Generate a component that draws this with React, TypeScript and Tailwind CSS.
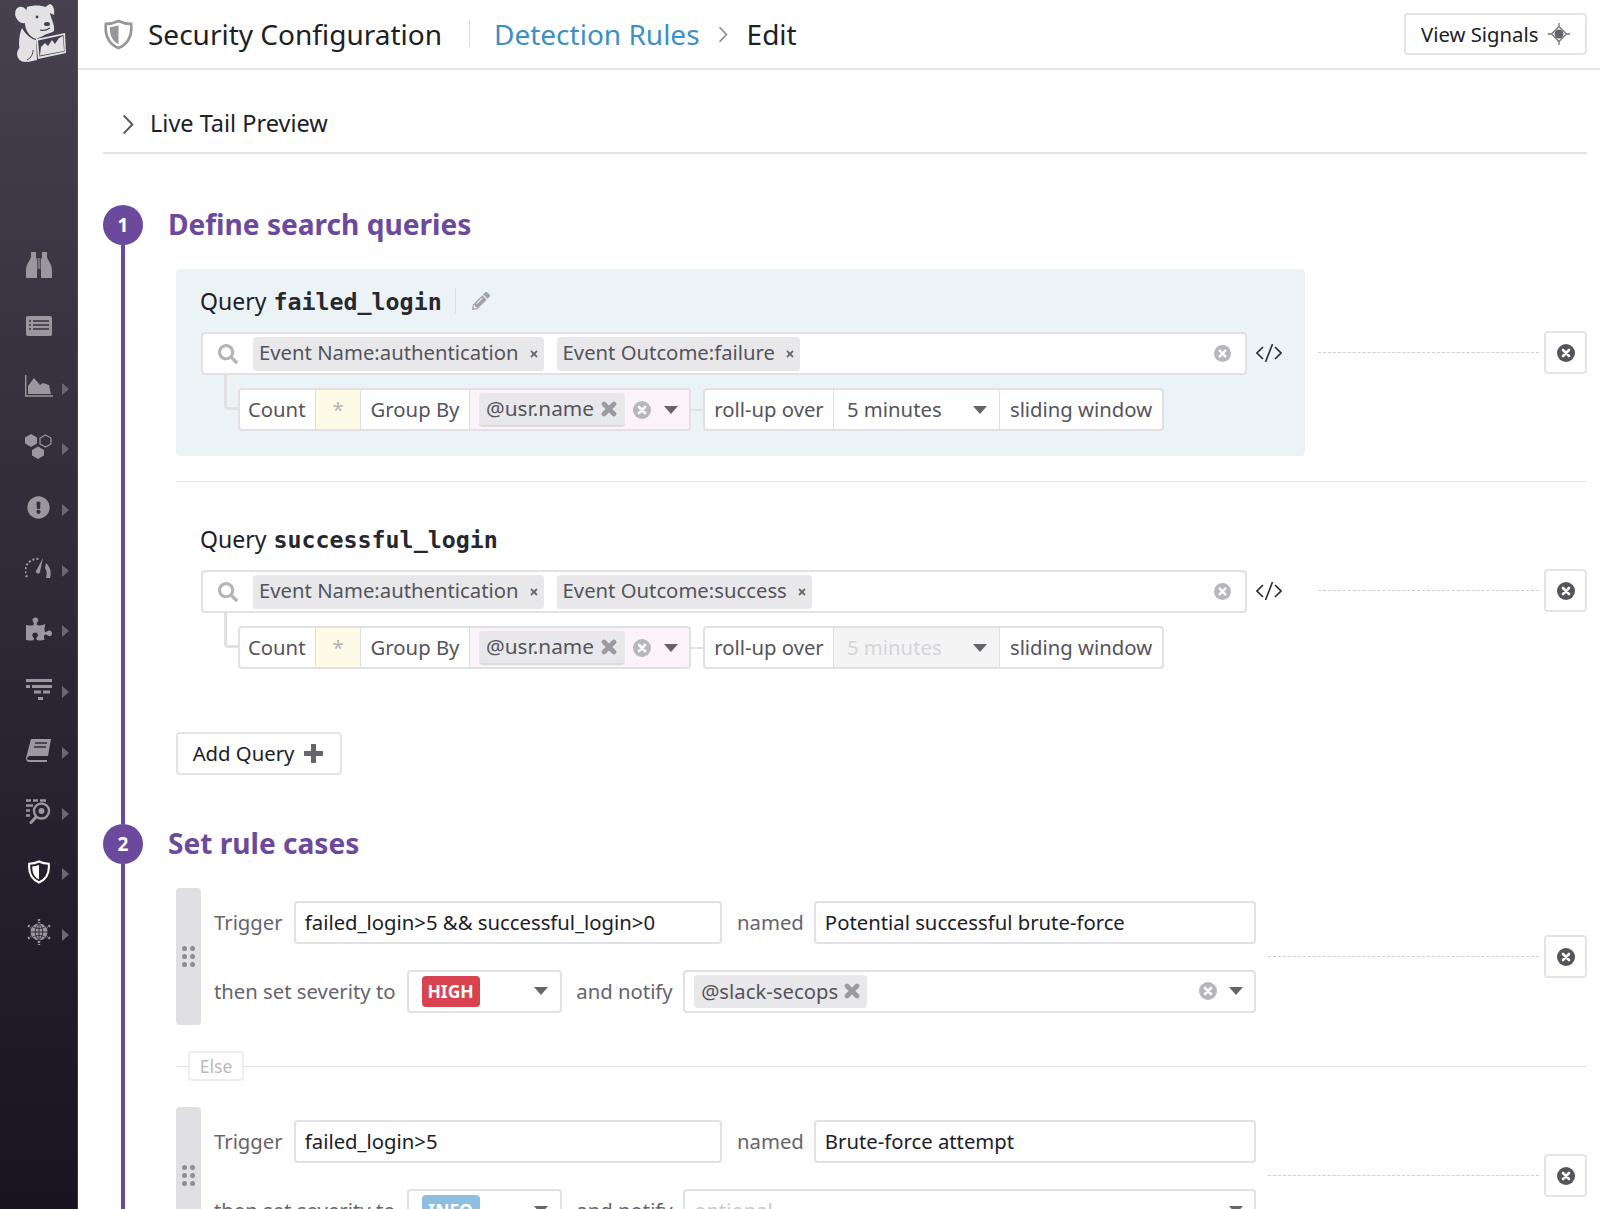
import React from 'react';
import { FaExclamationCircle, FaPuzzlePiece, FaSearch, FaPencilAlt, FaTimes } from 'react-icons/fa';

const Caret = () => (
  <svg width="14" height="8" viewBox="0 0 14 8" className="shrink-0"><path d="M0 0h14L7 8z" fill="#66636b" /></svg>
);

const Chevron = ({ className = '', color = '#55535a' }: { className?: string; color?: string }) => (
  <svg viewBox="0 0 12 22" className={`shrink-0 ${className}`}><path d="M1.500 1.500L10.500 11l-9 9.500" fill="none" stroke={color} strokeWidth="2" /></svg>
);

const ThickX = ({ color = '#9c9aa1' }: { color?: string }) => (
  <svg width="16" height="16" viewBox="0 0 16 16" className="shrink-0"><path d="M3 3l10 10M13 3L3 13" stroke={color} strokeWidth="4.600" strokeLinecap="round" /></svg>
);

const ClearCircle = ({ dark = false, size = 17 }: { dark?: boolean; size?: number }) => (
  <svg width={size} height={size} viewBox="0 0 18 18" className="shrink-0">
    <circle cx="9" cy="9" r="9" fill={dark ? '#56535b' : '#b8b6bc'} />
    <path d="M6 6l6 6M12 6l-6 6" stroke="#fff" strokeWidth="2.600" strokeLinecap="round" />
  </svg>
);

const ShieldIcon = ({ outer, inner, size = 31 }: { outer: string; inner: string; size?: number }) => (
  <svg width={size} height={size} viewBox="0 0 30 32" className="shrink-0">
    <path d="M15 2 C19 4 24 5 28 5 C29 15 27 25 15 30 C3 25 1 15 2 5 C6 5 11 4 15 2Z" fill="none" stroke={outer} strokeWidth="2.800" />
    <path d="M15 6.500 C12 7.500 9 8.300 6 8.500 C6 16 8 22.500 15 26Z" fill={inner} />
  </svg>
);

const Logo = () => (
  <svg width="78" height="70" viewBox="0 0 78 70" className="block">
    <g fill="#e2e1e4">
      <ellipse cx="22" cy="15" rx="6.500" ry="8.500" transform="rotate(-25 22 15)" />
      <path d="M27 7C33 5 41 5 45 7L50 4C53 5 55 9 54 15L50 13C51 19 55 25 54 31C52 33 47 33 43 36L36 39C28 36 24 28 25 19Z" />
      <path d="M22 28C26 35 31 39 36 40L37 60L28 62C22 58 19 50 19 44C19 38 20 32 22 28Z" />
      <circle cx="25" cy="54" r="8" />
      <path d="M36 39L65 33L66 53L38 59Z" />
    </g>
    <path d="M27 60C31 58 33 54 33 50" stroke="#45404e" strokeWidth="1" fill="none" />
    <path d="M38 40.500L63.500 35L64.500 51.500L39.500 56.500Z" fill="#45404e" />
    <path d="M40 55.500L41 47L45 43L48 46L52 40L55 44L59 38L63 36L64 51Z" fill="#e2e1e4" />
    <circle cx="37" cy="17" r="1.400" fill="#45404e" />
    <ellipse cx="47" cy="24" rx="3" ry="2" fill="#45404e" />
    <path d="M40 30C43 31 47 30 50 28" stroke="#45404e" strokeWidth="1.200" fill="none" />
  </svg>
);

const ICON = '#9a979f';
const navItems: { icon: React.ReactNode; arrow: boolean }[] = [
  {
    icon: (
      <svg width="26" height="26" viewBox="0 0 26 26">
        <path d="M5 0h5v5l1 3v18H0v-8C0 12 4 9 5 5z" fill={ICON} />
        <path d="M21 0h-5v5l-1 3v18h11v-8C26 12 22 9 21 5z" fill={ICON} />
        <rect x="11.500" y="6" width="3" height="11" fill="#77737d" />
      </svg>
    ),
    arrow: false,
  },
  {
    icon: (
      <svg width="26" height="20" viewBox="0 0 26 20">
        <rect width="26" height="20" rx="2" fill={ICON} />
        <path d="M3 5h2M7 5h16M3 9h2M7 9h16M3 13h2M7 13h16" stroke="#38323f" strokeWidth="1.400" />
      </svg>
    ),
    arrow: false,
  },
  {
    icon: (
      <svg width="28" height="22" viewBox="0 0 28 22">
        <path d="M.7 0v21H28" fill="none" stroke={ICON} strokeWidth="1.400" />
        <path d="M3 19V11L9 3l6 7 3-2 6 2 2 9z" fill={ICON} />
      </svg>
    ),
    arrow: true,
  },
  {
    icon: (
      <svg width="27" height="25" viewBox="0 0 27 25">
        <path d="M6 0l6 3.500v6L6 13 0 9.500v-6z" fill={ICON} />
        <path d="M20.500 1l5.500 3v6l-5.500 3L15 10V4z" fill="none" stroke={ICON} strokeWidth="1.200" />
        <path d="M13 12.500l6 3.500v5.500L13 25l-6-3.500V16z" fill={ICON} />
      </svg>
    ),
    arrow: true,
  },
  { icon: <FaExclamationCircle size={23} color={ICON} />, arrow: true },
  {
    icon: (
      <svg width="27" height="22" viewBox="0 0 27 22">
        <path d="M2 20A12 12 0 0 1 14 2" fill="none" stroke={ICON} strokeWidth="2.200" strokeDasharray="2 2" />
        <path d="M18 1l-3 14c-1 3-5 1-4-1z" fill={ICON} />
        <path d="M21 6c4 4 6 9 4 15h-4c1-4 1-7-1-10z" fill={ICON} />
      </svg>
    ),
    arrow: true,
  },
  { icon: <FaPuzzlePiece size={26} color={ICON} />, arrow: true },
  {
    icon: (
      <svg width="26" height="22" viewBox="0 0 26 22">
        <path d="M0 1.500h26M0 7.500h4M6 7.500h20M8 13h7M17 13h7M12 19.500h5" stroke={ICON} strokeWidth="3" />
      </svg>
    ),
    arrow: true,
  },
  {
    icon: (
      <svg width="25" height="23" viewBox="0 0 25 23">
        <path d="M5 0h20l-3 17H3L1 19c0 1 1 2 2 2h18v2H3c-2 0-3-2-3-4z" fill={ICON} />
        <path d="M9 4h12M8 8h12" stroke="#332d3a" strokeWidth="1.600" />
      </svg>
    ),
    arrow: true,
  },
  {
    icon: (
      <svg width="26" height="25" viewBox="0 0 26 25">
        <path d="M0 1.500h5M7 1.500h5M14 1.500h6M0 6.500h7M0 11.500h4M0 16.500h4" stroke={ICON} strokeWidth="2.400" />
        <circle cx="15.500" cy="12" r="7.500" fill="none" stroke={ICON} strokeWidth="2.400" />
        <circle cx="15.500" cy="12" r="3" fill={ICON} />
        <path d="M10 18l-5 5.500" stroke={ICON} strokeWidth="3" strokeLinecap="round" />
      </svg>
    ),
    arrow: true,
  },
  { icon: <ShieldIcon outer="#ffffff" inner="#ffffff" size={24} />, arrow: true },
  {
    icon: (
      <svg width="26" height="26" viewBox="0 0 26 26">
        <circle cx="13" cy="13" r="8.500" fill={ICON} />
        <path d="M4.500 13h17M13 4.500v17M7 8c4 2 8 2 12 0M7 18c4-2 8-2 12 0M13 4.500c-5 5-5 12 0 17M13 4.500c5 5 5 12 0 17" stroke="#2d2734" strokeWidth=".9" fill="none" />
        <path d="M13 0v4M13 22v4M2 6.500l3 2M24 6.500l-3 2M2 19.500l3-2M24 19.500l-3-2" stroke={ICON} strokeWidth="2.400" strokeDasharray="2 1" />
      </svg>
    ),
    arrow: true,
  },
];

const Sidebar = () => (
  <aside className="w-[78px] shrink-0 h-full bg-gradient-to-b from-[#46404f] to-[#191421] border-r border-[#6a6672]/40">
    <div className="h-[234.500px]">
      <Logo />
    </div>
    <nav className="flex flex-col">
      {navItems.map((item, i) => (
        <div key={i} className="h-[60.700px] flex items-center relative">
          <div className="w-[78px] flex justify-center items-center">{item.icon}</div>
          {item.arrow && (
            <svg width="7" height="12" viewBox="0 0 7 12" className="absolute left-[62px] mt-[5px]"><path d="M0 0l7 6-7 6z" fill="#6b6773" /></svg>
          )}
        </div>
      ))}
    </nav>
  </aside>
);

const Header = () => (
  <header className="h-[70px] shrink-0 flex items-center pl-[25px] pr-[13px] border-b-2 border-[#e4e4e8]">
    <ShieldIcon outer="#98969c" inner="#98969c" />
    <span className="ml-[14px] text-[28px] text-[#1c2127]">Security Configuration</span>
    <span className="ml-[27px] h-[26px] w-px bg-[#dcdce0]" />
    <span className="ml-[24px] text-[28px] text-[#3d8fc6]">Detection Rules</span>
    <Chevron className="ml-[18px] w-[10px] h-[17px]" color="#88858d" />
    <span className="ml-[19px] text-[28px] text-[#1c2127]">Edit</span>
    <button className="ml-auto h-[42px] w-[183px] flex items-center justify-between pl-[15px] pr-[15px] rounded border-2 border-[#e4e4e8] text-[20.300px] text-[#1c2127]">
      <span>View Signals</span>
      <svg width="22" height="22" viewBox="0 0 22 22">
        <circle cx="11" cy="11" r="4.500" fill="#66636b" />
        <path d="M11 3.500L18.500 11 11 18.500 3.500 11z" fill="none" stroke="#77747c" strokeWidth="1.300" />
        <path d="M11 0v3.500M11 18.500V22M0 11h3.500M18.500 11H22" stroke="#77747c" strokeWidth="1.300" />
      </svg>
    </button>
  </header>
);

const Tag = ({ label }: { label: string }) => (
  <span className="h-[34px] flex items-center pl-[6px] pr-[5px] pb-[3px] gap-[10px] bg-[#e8e8ea] rounded-sm text-[20.300px] text-[#55545c] whitespace-nowrap">
    {label}
    <FaTimes size={10} color="#66636b" className="mt-[3px]" />
  </span>
);

const GroupTag = () => (
  <span className="h-[34px] flex items-center pl-[7px] pr-[8px] gap-[7px] bg-[#e8e8ea] rounded border-b-2 border-[#dcdce0] text-[20.800px] text-[#55545c]">
    @usr.name
    <ThickX />
  </span>
);

const Cell = ({ children, className = '' }: { children: React.ReactNode; className?: string }) => (
  <div className={`h-full flex items-center border-l border-[#dfdfe4] first:border-l-0 text-[20.300px] text-[#55545c] ${className}`}>{children}</div>
);

const Query = ({ name, outcome, active, disabled }: { name: string; outcome: string; active?: boolean; disabled?: boolean }) => (
  <div className="flex items-start">
    <div className={`w-[1129px] shrink-0 rounded pl-[25px] pt-[16px] pb-[25px] ${active ? 'bg-[#ecf3f7]' : ''}`}>
      <div className="h-[32px] flex items-center mb-[15px] text-[23px] text-[#1c2127]">
        <span className="-ml-px">Query</span>
        <span className="ml-[7px] mt-[2px] [font-family:'DejaVu_Sans_Mono',monospace] font-bold text-[23.300px] text-[#27282e]">{name}</span>
        {active && (
          <>
            <span className="ml-[13px] h-[26px] w-px bg-[#dcdfe3]" />
            <FaPencilAlt size={18} color="#a5a3a9" className="ml-[16px]" />
          </>
        )}
      </div>
      <div className="flex items-center">
        <div className="w-[1046px] shrink-0 h-[43px] flex items-center gap-[13px] pl-[15px] pr-[14px] bg-white rounded border-2 border-[#e0e0e5]">
          <FaSearch size={20} color="#b5b3b9" className="mr-[2px]" />
          <Tag label="Event Name:authentication" />
          <Tag label={`Event Outcome:${outcome}`} />
          <div className="flex-1" />
          <ClearCircle />
        </div>
        <svg width="26" height="18" viewBox="0 0 26 18" className="ml-[9px] shrink-0 -mt-[2px]">
          <path d="M7 3L1 9l6 6M19 3l6 6-6 6M16.500 0l-7 18" fill="none" stroke="#2b2b33" strokeWidth="1.600" />
        </svg>
      </div>
      <div className="flex items-start pl-[23px]">
        <div className="w-[14px] h-[35px] border-l-[3px] border-b-[3px] border-[#e0e0e5] rounded-bl shrink-0" />
        <div className="mt-[13px] h-[43px] flex items-center">
          <div className="w-[453px] h-full flex rounded border-2 border-[#e0e0e5] bg-white overflow-hidden">
            <Cell className="w-[75px] pl-[8px]">Count</Cell>
            <Cell className="w-[45px] justify-center bg-[#fdfbe6] text-[#b5b3b9]">*</Cell>
            <Cell className="w-[109px] justify-center">Group By</Cell>
            <Cell className="flex-1 bg-[#fcf2f9] pl-[9px]">
              <GroupTag />
              <span className="ml-[8px]"><ClearCircle size={18} /></span>
              <span className="ml-[13px]"><Caret /></span>
            </Cell>
          </div>
          <div className="w-[12px] h-[2px] bg-[#e0e0e5]" />
          <div className="w-[461px] h-full flex rounded border-2 border-[#e0e0e5] bg-white overflow-hidden">
            <Cell className="w-[128px] justify-center">roll-up over</Cell>
            <Cell className={`w-[166px] pl-[13px] pr-[12px] justify-between ${disabled ? 'bg-[#f4f4f5] text-[#d5d5d9]' : 'text-[#1c2127]'}`}>
              <span>5 minutes</span>
              <Caret />
            </Cell>
            <Cell className="flex-1 justify-center">sliding window</Cell>
          </div>
        </div>
      </div>
    </div>
    <SideRemove className="h-[43px] mt-[62px] ml-[13px]" />
  </div>
);

const SideRemove = ({ className = '' }: { className?: string }) => (
  <div className={`flex-1 flex items-center ${className}`}>
    <div className="flex-1 border-t border-dashed border-[#cfcfd4]" />
    <div className="ml-[5px] w-[43px] h-[43px] shrink-0 flex items-center justify-center rounded border-2 border-[#e4e4e8] bg-white">
      <ClearCircle dark size={18} />
    </div>
  </div>
);

const Input = ({ value, className = '' }: { value: string; className?: string }) => (
  <div className={`h-[43px] flex items-center px-[9px] rounded border-2 border-[#e0e0e5] text-[20.300px] text-[#1c2127] ${className}`}>{value}</div>
);

const Label = ({ children, className = '' }: { children: React.ReactNode; className?: string }) => (
  <span className={`text-[20.300px] text-[#66646c] whitespace-nowrap ${className}`}>{children}</span>
);

const Rule = ({ trigger, name, severity, badge, notify }: { trigger: string; name: string; severity: string; badge: string; notify?: boolean }) => (
  <div className="flex items-center">
    <div className="w-[25px] h-[137px] shrink-0 rounded bg-[#e0dfe3] grid grid-cols-2 content-center justify-items-center gap-y-[3px] px-[5px]">
      {[0, 1, 2, 3, 4, 5].map(d => (
        <span key={d} className="w-[5px] h-[5px] rounded-full bg-[#8f8d94]" />
      ))}
    </div>
    <div className="w-[1055px] shrink-0 pl-[13px]">
      <div className="flex items-center">
        <Label className="w-[80px]">Trigger</Label>
        <Input value={trigger} className="w-[429px]" />
        <Label className="w-[92px] pl-[15px]">named</Label>
        <Input value={name} className="w-[443px]" />
      </div>
      <div className="flex items-center mt-[26px]">
        <Label className="w-[193px]">then set severity to</Label>
        <div className="w-[156px] h-[43px] flex items-center justify-between pl-[13px] pr-[12px] rounded border-2 border-[#e0e0e5]">
          <span className={`w-[58px] h-[31px] flex items-center justify-center rounded-sm text-white text-[17.500px] font-bold ${badge}`}>{severity}</span>
          <Caret />
        </div>
        <Label className="w-[121px] pl-[14px]">and notify</Label>
        <div className="w-[574px] h-[43px] flex items-center pl-[9px] pr-[11px] rounded border-2 border-[#e0e0e5]">
          {notify ? (
            <span className="h-[33px] flex items-center pl-[7px] pr-[7px] gap-[6px] bg-[#e8e8ea] rounded text-[20.300px] text-[#55545c]">
              @slack-secops
              <ThickX />
            </span>
          ) : (
            <span className="text-[20.300px] text-[#c9c9ce]">optional</span>
          )}
          <div className="flex-1" />
          {notify && <ClearCircle size={18} />}
          <span className="ml-[12px]"><Caret /></span>
        </div>
      </div>
    </div>
    <SideRemove className="ml-[12px]" />
  </div>
);

const Step = ({ n, title, children, className = '' }: { n: number; title: string; children: React.ReactNode; className?: string }) => (
  <section className="flex">
    <div className="w-[40px] shrink-0 flex flex-col items-center">
      <div className="w-[40px] h-[40px] shrink-0 rounded-full bg-[#6b4a9e] text-white text-[19px] font-bold flex items-center justify-center">{n}</div>
      <div className="flex-1 w-[4px] bg-[#6b4a9e]" />
    </div>
    <div className={`flex-1 min-w-0 pl-[25px] ${className}`}>
      <h2 className="h-[40px] pb-[2px] flex items-center text-[28.100px] font-bold text-[#6b4a9e]">{title}</h2>
      <div className="pl-[8px] pt-[24px]">{children}</div>
    </div>
  </section>
);

export default function App() {
  return (
    <div className="w-[1600px] h-[1209px] overflow-hidden flex bg-white [font-family:'Noto_Sans',sans-serif]">
      <Sidebar />
      <main className="flex-1 min-w-0 flex flex-col">
        <Header />
        <div className="ml-[25px] mr-[13px]">
          <div className="h-[84px] pt-[26px] flex items-center border-b-2 border-[#e4e4e8]">
            <Chevron className="ml-[19px] w-[12px] h-[21px]" />
            <span className="ml-[16px] text-[23.500px] text-[#1c2127]">Live Tail Preview</span>
          </div>
          <div className="mt-[51px]">
            <Step n={1} title="Define search queries" className="pb-[49px]">
              <Query name="failed_login" outcome="failure" active />
              <div className="mt-[25px] mb-[25px] h-px bg-[#e4e4e8]" />
              <Query name="successful_login" outcome="success" disabled />
              <button className="mt-[38px] w-[166px] h-[43px] flex items-center justify-center gap-[10px] pr-[2px] rounded border-2 border-[#e4e4e8] text-[20.300px] text-[#1c2127]">
                <span>Add Query</span>
                <svg width="19" height="19" viewBox="0 0 19 19"><path d="M9.500 1v17M1 9.500h17" stroke="#66636b" strokeWidth="5" strokeLinecap="round" /></svg>
              </button>
            </Step>
            <Step n={2} title="Set rule cases">
              <Rule trigger="failed_login>5 && successful_login>0" name="Potential successful brute-force" severity="HIGH" badge="bg-[#d9434f]" notify />
              <div className="relative h-[30px] my-[26px] flex items-center">
                <div className="w-full h-px bg-[#e4e4e8]" />
                <span className="absolute left-[12px] w-[56px] h-[30px] flex items-center justify-center bg-white rounded-sm border-2 border-[#eeeef0] text-[17.500px] text-[#b9b8bd]">Else</span>
              </div>
              <Rule trigger="failed_login>5" name="Brute-force attempt" severity="INFO" badge="bg-[#8ebfe0]" />
            </Step>
          </div>
        </div>
      </main>
    </div>
  );
}
